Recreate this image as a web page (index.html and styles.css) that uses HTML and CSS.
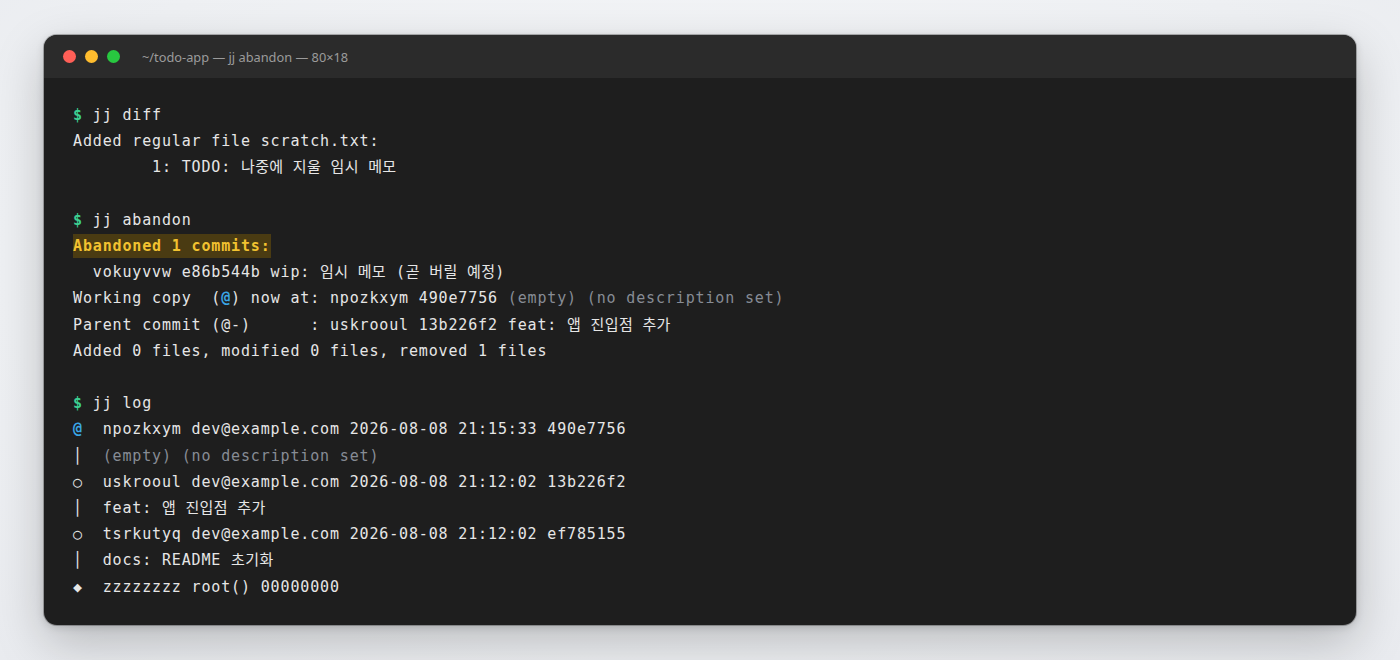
FILE: index.html
```html
<!DOCTYPE html>
<html lang="ko">
<head>
<meta charset="utf-8">
<title>jj abandon</title>
<link rel="stylesheet" href="styles.css">
</head>
<body>
<div class="page">
  <div class="window">
    <div class="titlebar">
      <div class="lights">
        <span class="light red"></span>
        <span class="light yellow"></span>
        <span class="light green"></span>
      </div>
      <div class="title">~/todo-app — jj abandon — 80×18</div>
    </div>
    <pre class="term"><span class="p">$</span> jj diff
Added regular file scratch.txt:
        1: TODO: <span class="ko">나중에 지울 임시 메모</span>

<span class="p">$</span> jj abandon
<span class="warn">Abandoned 1 commits:</span>
  vokuyvvw e86b544b wip: <span class="ko">임시 메모</span> (<span class="ko">곧 버릴 예정</span>)
Working copy  (<span class="at">@</span>) now at: npozkxym 490e7756 <span class="dim">(empty) (no description set)</span>
Parent commit (@-)      : uskrooul 13b226f2 feat: <span class="ko">앱 진입점 추가</span>
Added 0 files, modified 0 files, removed 1 files

<span class="p">$</span> jj log
<span class="at">@</span>  npozkxym dev@example.com 2026-08-08 21:15:33 490e7756
│  <span class="dim">(empty) (no description set)</span>
○  uskrooul dev@example.com 2026-08-08 21:12:02 13b226f2
│  feat: <span class="ko">앱 진입점 추가</span>
○  tsrkutyq dev@example.com 2026-08-08 21:12:02 ef785155
│  docs: README <span class="ko">초기화</span>
◆  zzzzzzzz root() 00000000</pre>
  </div>
</div>
</body>
</html>
```

FILE: styles.css
```css
html, body {
  margin: 0;
  padding: 0;
}
body {
  background: radial-gradient(ellipse at 50% 40%, #f7f8fa 0%, #eef0f3 70%, #e9ebef 100%);
  width: 1400px;
  height: 660px;
  overflow: hidden;
}
.page {
  padding: 35px 44px;
}
.window {
  background: #1e1e1e;
  border-radius: 13px;
  overflow: hidden;
  box-shadow: 0 18px 50px rgba(0, 0, 0, 0.22), 0 2px 8px rgba(0, 0, 0, 0.15), 0 0 0 1px rgba(0, 0, 0, 0.25);
  height: 590px;
  box-sizing: border-box;
}
.titlebar {
  height: 43px;
  background: #2b2b2b;
  display: flex;
  align-items: center;
  padding-left: 19px;
  gap: 22px;
}
.lights {
  display: flex;
  gap: 9px;
}
.light {
  width: 13px;
  height: 13px;
  border-radius: 50%;
  display: block;
}
.red { background: #ff5f57; }
.yellow { background: #febc2e; }
.green { background: #28c840; }
.title {
  font-family: "Noto Sans", "Liberation Sans", sans-serif;
  font-size: 12.8px;
  color: #9b9b9b;
  padding-top: 1px;
}
.term {
  margin: 0;
  padding: 24px 29px 0;
  font-family: "DejaVu Sans Mono", "Noto Sans CJK KR", monospace;
  font-size: 15px;
  letter-spacing: 0.85px;
  line-height: 26.2px;
  color: #e6e6e6;
  white-space: pre;
}
.ko {
  letter-spacing: 0.35px;
}
.p { color: #3ccf91; font-weight: bold; }
.at { color: #3aa6e6; font-weight: bold; }
.dim { color: #878c95; }
.warn {
  color: #f2c230;
  font-weight: bold;
  background: #4a3b12;
  padding: 3px 0;
}
```
